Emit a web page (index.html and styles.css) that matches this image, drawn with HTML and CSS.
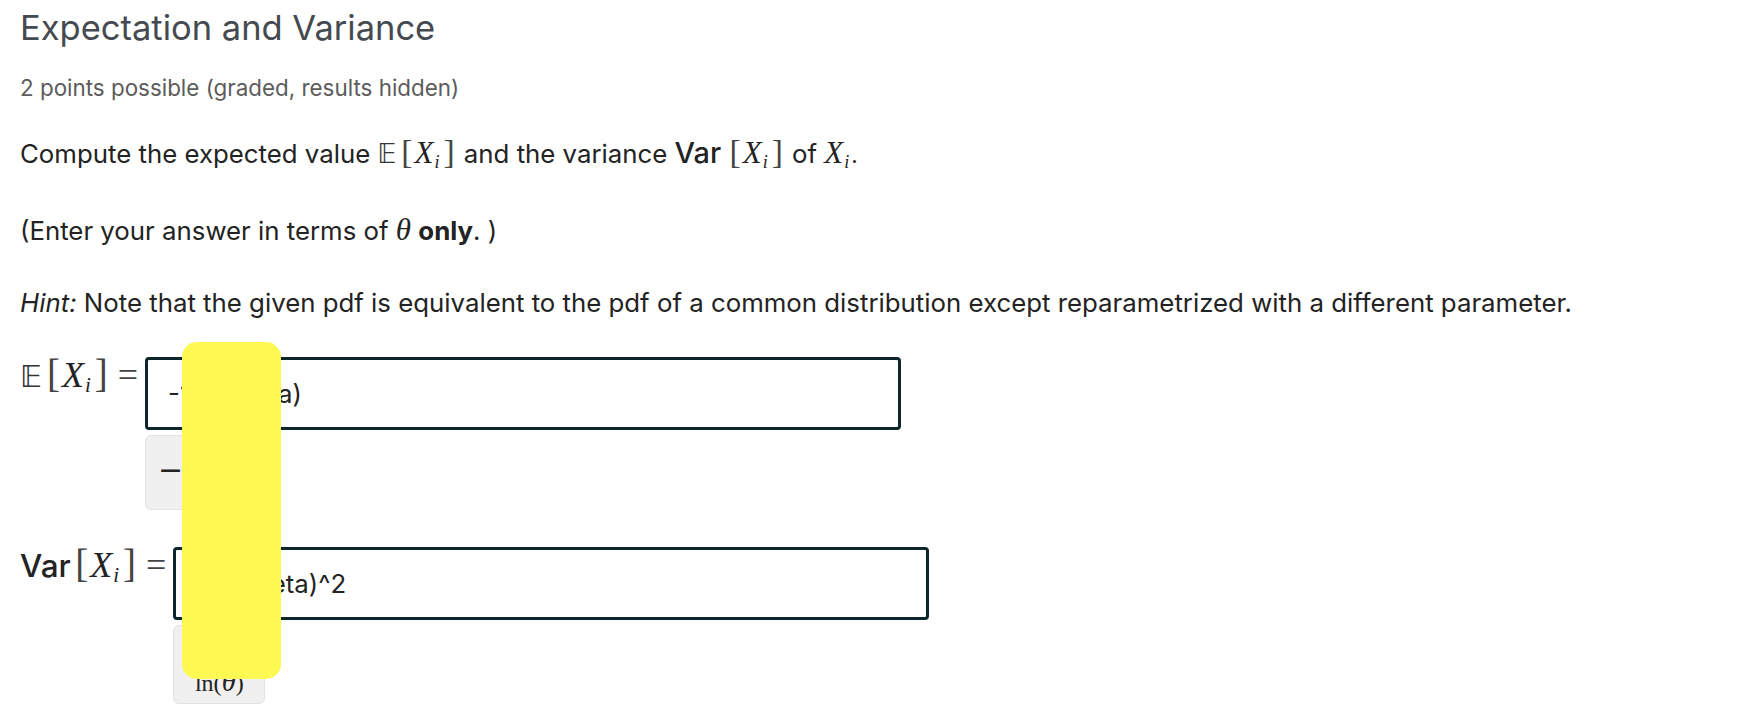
FILE: index.html
```html
<!DOCTYPE html>
<html lang="en">
<head>
    <meta charset="UTF-8">
    <title>Expectation and Variance</title>
    <link rel="stylesheet" href="styles.css">
</head>
<body>
    <div class="problem">
        <h2 class="problem-title">Expectation and Variance</h2>
        <div class="points">2 points possible (graded, results hidden)</div>

        <p>Compute the expected value <span class="math"><span class="bb">𝔼</span><span class="br">[</span><span class="mi">X</span><sub class="sub">i</sub><span class="br">]</span></span> and the variance <span class="math"><span class="var">Var</span> <span class="br">[</span><span class="mi">X</span><sub class="sub">i</sub><span class="br">]</span></span> of <span class="math"><span class="mi">X</span><sub class="sub">i</sub>.</span></p>

        <p>(Enter your answer in terms of <span class="mi">θ</span> <b>only</b>. )</p>

        <p><i>Hint:</i> Note that the given pdf is equivalent to the pdf of a common distribution except reparametrized with a different parameter.</p>

        <div class="answer">
            <span class="label math"><span class="bb">𝔼</span><span class="br">[</span><span class="mi">X</span><sub class="sub">i</sub><span class="br">]</span><span class="eq">=</span></span>
            <div class="field">
                <input class="entry" type="text" value="-1/ln(theta)">
                <div class="preview preview-short">
                    <span class="minus">−</span>
                    <span class="frac"><span class="num">1</span><span class="den">ln(<span class="mi">θ</span>)</span></span>
                </div>
            </div>
        </div>

        <div class="answer">
            <span class="label math"><span class="var">Var</span> <span class="br">[</span><span class="mi">X</span><sub class="sub">i</sub><span class="br">]</span><span class="eq">=</span></span>
            <div class="field">
                <input class="entry" type="text" value="1/ln(theta)^2">
                <div class="preview preview-tall">
                    <span class="frac"><span class="num">1</span><span class="den">ln(<span class="mi">θ</span>)</span></span>
                </div>
            </div>
        </div>
    </div>

    <div class="redact"></div>
</body>
</html>
```

FILE: styles.css
```css
body {
    margin: 0;
    padding: 0 20px;
    font-family: Inter, "Noto Sans", sans-serif;
    color: #232323;
    background-color: #fff;
}
.problem-title {
    margin: 0;
    padding-top: 8px;
    font-size: 34.5px;
    line-height: 40px;
    font-weight: 400;
    color: #454a50;
}
.points {
    margin-top: 26px;
    font-size: 22.4px;
    line-height: 27px;
    color: #5c5c5c;
}
p {
    margin: 0;
    font-size: 25.8px;
    line-height: 32px;
}
.points + p {
    margin-top: 37px;
}
p + p {
    margin-top: 44px;
}
p + p + p {
    margin-top: 40px;
}
.math {
    font-family: "Liberation Serif", "DejaVu Serif", serif;
}
.mi {
    font-family: "Liberation Serif", "DejaVu Serif", serif;
    font-style: italic;
    font-size: 1.2em;
    line-height: 0;
}
.sub {
    font-family: "Liberation Serif", serif;
    font-style: italic;
    font-size: 0.7em;
    line-height: 0;
    vertical-align: -0.25em;
    margin: 0 2px 0 1px;
}
.br {
    font-family: "Liberation Serif", serif;
    font-size: 1.3em;
    line-height: 0;
    color: #444;
    margin: 0 2px;
}
.bb {
    font-family: "DejaVu Sans", serif;
    color: #333;
    margin-right: 3px;
}
.var {
    font-family: Inter, sans-serif;
    font-weight: 500;
    font-size: 1.12em;
    line-height: 0;
}
.answer {
    display: flex;
    align-items: flex-start;
    margin-top: 38px;
}
.answer + .answer {
    margin-top: 37px;
}
.label {
    font-size: 30px;
    line-height: 40px;
    margin-right: 7px;
    white-space: nowrap;
}
.label .var {
    font-size: 1.05em;
    margin-right: -5px;
}
.eq {
    font-family: "Liberation Serif", serif;
    font-size: 1.2em;
    line-height: 0;
    color: #444;
    margin-left: 8px;
}
.field {
    display: flex;
    flex-direction: column;
    align-items: flex-start;
    gap: 5px;
}
.entry {
    width: 756px;
    height: 73px;
    box-sizing: border-box;
    border: 3px solid #0d262c;
    border-radius: 4px;
    padding: 0 20px;
    font-family: Inter, sans-serif;
    font-size: 25.8px;
    color: #232323;
    outline: none;
}
.preview {
    display: flex;
    align-items: center;
    gap: 6px;
    padding: 0 12px;
    background-color: #f0f0f0;
    border: 1px solid #e3e3e3;
    border-radius: 6px;
    box-sizing: border-box;
    font-family: "Liberation Serif", serif;
    font-size: 24px;
    color: #222;
}
.preview-short {
    width: 124px;
    height: 75px;
    padding-bottom: 6px;
}
.preview-tall {
    width: 92px;
    height: 79px;
    justify-content: center;
    align-items: flex-end;
    padding-bottom: 7px;
}
.minus {
    font-family: "DejaVu Serif", serif;
    font-size: 30px;
    margin-right: 2px;
}
.frac {
    display: inline-flex;
    flex-direction: column;
    align-items: center;
    line-height: 1.1;
}
.num {
    align-self: stretch;
    text-align: center;
    border-bottom: 1px solid #222;
}
.redact {
    position: absolute;
    left: 182px;
    top: 342px;
    width: 99px;
    height: 337px;
    background-color: #fef952;
    border-radius: 15px;
}
```
